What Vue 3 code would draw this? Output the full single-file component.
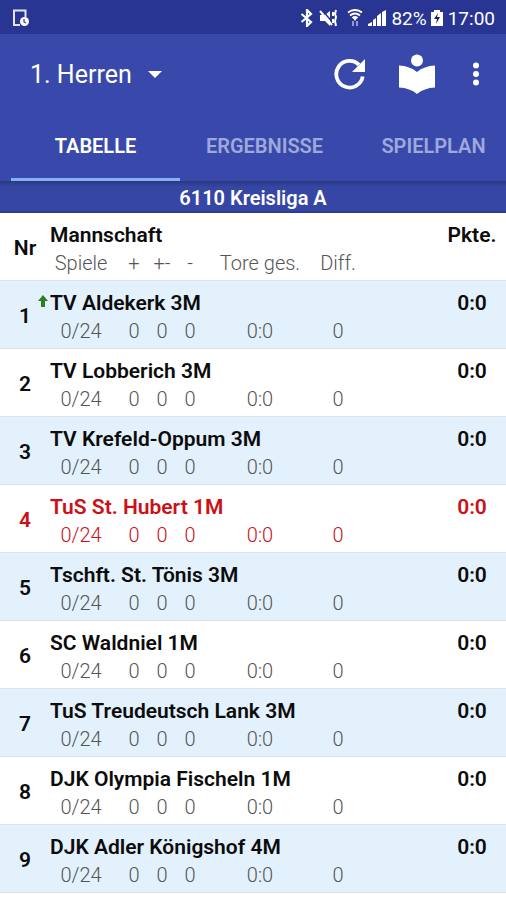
<script setup>
import { ref } from 'vue'

const mannschaft = ref('1. Herren')
const tabs = ['Tabelle', 'Ergebnisse', 'Spielplan']
const aktiv = ref('Tabelle')

const eigenes = 'TuS St. Hubert 1M'

const teams = [
  { name: 'TV Aldekerk 3M', auf: true },
  { name: 'TV Lobberich 3M' },
  { name: 'TV Krefeld-Oppum 3M' },
  { name: 'TuS St. Hubert 1M' },
  { name: 'Tschft. St. Tönis 3M' },
  { name: 'SC Waldniel 1M' },
  { name: 'TuS Treudeutsch Lank 3M' },
  { name: 'DJK Olympia Fischeln 1M' },
  { name: 'DJK Adler Königshof 4M' },
].map(t => ({ spiele: '0/24', s: 0, u: 0, n: 0, tore: '0:0', diff: 0, punkte: '0:0', ...t }))
</script>

<template>
  <div class="app">
    <div class="status">
      <svg width="18" height="18" viewBox="0 0 18 18">
        <path d="M8 16H2V1.500h11.500V8" fill="none" stroke="#e4e6f8" stroke-width="2" />
        <circle cx="12.500" cy="12.500" r="4.500" fill="#fff" />
        <path d="M12 10v3l2 1" fill="none" stroke="#283593" stroke-width="1.200" />
      </svg>
      <div class="status-right">
        <svg width="14" height="18" viewBox="0 0 14 18">
          <path d="M1.500 5l9.500 8-4 4V1l4 4-9.500 8" fill="none" stroke="#fff" stroke-width="2.200" />
        </svg>
        <svg class="mute" width="19" height="18" viewBox="0 0 19 18">
          <path d="M1 6h5l5-4v15l-5-5H1z" fill="#fff" />
          <path d="M3 1l12 14" stroke="#283593" stroke-width="1.500" />
          <path d="M1 2l12 14" stroke="#fff" stroke-width="2" />
          <path d="M14 3v4M14 10v4M17 1l-1 4 1 3-1 4 1 5" fill="none" stroke="#fff" stroke-width="2" />
        </svg>
        <svg class="wifi" width="16" height="18" viewBox="0 0 16 18">
          <path d="M1 3.500q7-5 14 0M3 6.500q5-4 10 0M5.500 9q2.500-2 5 0" fill="none" stroke="#fff" stroke-width="2" />
          <path d="M6 9h4L8 12z" fill="#fff" />
          <path d="M6 12v5M10 12v5" stroke="#8f98d2" stroke-width="2" />
        </svg>
        <svg class="signal" width="18" height="18" viewBox="0 0 18 18">
          <path d="M0 15l4-2v4H0zM5 11l3-2v8H5zM9 7l4-3v13H9zM14 3l4-2v16h-4z" fill="#fff" />
        </svg>
        <span class="akku">82%</span>
        <svg class="battery" width="12" height="18" viewBox="0 0 12 18">
          <path d="M3 1h6v2h3v14H0V3h3z" fill="#fff" />
          <path d="M7 4L3 10h3l-1 5 4-7H6z" fill="#1b2150" />
        </svg>
        <span>17:00</span>
      </div>
    </div>

    <header class="kopf">
      <div class="toolbar">
        <label class="auswahl">
          <select v-model="mannschaft" aria-label="Mannschaft">
            <option>1. Herren</option>
          </select>
          <svg width="14" height="7" viewBox="0 0 14 7"><path d="M0 0h14L7 7z" fill="#fff" /></svg>
        </label>
        <button class="icon" aria-label="Aktualisieren">
          <svg width="32" height="32" viewBox="0 0 32 32">
            <path d="M28.700 18.500A13.300 13.300 0 1 1 25 6.800" fill="none" stroke="#fff" stroke-width="3.800" />
            <path d="M31 1v13H18z" fill="#fff" />
          </svg>
        </button>
        <button class="icon" aria-label="Liga">
          <svg width="36" height="40" viewBox="0 0 36 40">
            <circle cx="18" cy="6.500" r="6" fill="#fff" />
            <path d="M18 18Q11 12 0 11.500V33.500Q11 34 18 40Q25 34 36 33.500V11.500Q25 12 18 18z" fill="#fff" />
          </svg>
        </button>
        <button class="icon mehr" aria-label="Mehr">
          <svg width="8" height="24" viewBox="0 0 8 24">
            <g fill="#fff">
              <circle cx="4" cy="3.500" r="3" />
              <circle cx="4" cy="12" r="3" />
              <circle cx="4" cy="20.500" r="3" />
            </g>
          </svg>
        </button>
      </div>

      <nav class="tabs">
        <button
          v-for="t in tabs"
          :key="t"
          class="tab"
          :class="{ aktiv: aktiv === t }"
          @click="aktiv = t"
        >{{ t }}</button>
      </nav>
    </header>

    <h1 class="liga">6110 Kreisliga A</h1>

    <table class="tabelle">
      <colgroup>
        <col class="c-nr">
        <col class="c-spiele">
        <col class="c-zahl">
        <col class="c-zahl">
        <col class="c-zahl">
        <col class="c-tore">
        <col class="c-diff">
        <col>
        <col class="c-pkte">
      </colgroup>
      <thead>
        <tr class="oben">
          <th class="nr" rowspan="2">Nr</th>
          <th class="name" colspan="7">Mannschaft</th>
          <th class="pkte">Pkte.</th>
        </tr>
        <tr class="unten">
          <th class="spiele">Spiele</th>
          <th>+</th>
          <th>+-</th>
          <th>-</th>
          <th>Tore ges.</th>
          <th>Diff.</th>
          <th colspan="2"></th>
        </tr>
      </thead>
      <tbody v-for="(t, i) in teams" :key="t.name" :class="{ eigenes: t.name === eigenes }">
        <tr class="oben">
          <td class="nr" rowspan="2">{{ i + 1 }}</td>
          <td class="name" colspan="7">
            <svg v-if="t.auf" class="pfeil" width="10" height="12" viewBox="0 0 10 12">
              <path d="M5 0l5 6H7v6H3V6H0z" fill="#2e7d1e" />
            </svg>{{ t.name }}
          </td>
          <td class="pkte">{{ t.punkte }}</td>
        </tr>
        <tr class="unten">
          <td class="spiele">{{ t.spiele }}</td>
          <td>{{ t.s }}</td>
          <td>{{ t.u }}</td>
          <td>{{ t.n }}</td>
          <td>{{ t.tore }}</td>
          <td>{{ t.diff }}</td>
          <td colspan="2"></td>
        </tr>
      </tbody>
    </table>
  </div>
</template>

<style>
body {
  background: #fff;
}
</style>

<style scoped>
.app {
  font-family: Roboto, "Liberation Sans", sans-serif;
  color: #0c0c0c;
  overflow: hidden;
}

button,
select {
  border: none;
  background: none;
  padding: 0;
  font-family: inherit;
  color: #fff;
  cursor: pointer;
}

svg {
  display: block;
  flex: none;
}

.status {
  display: flex;
  align-items: center;
  justify-content: space-between;
  height: 34px;
  padding: 2px 11px 0 12px;
  box-sizing: border-box;
  background: #283593;
  color: #fff;
  font-size: 19px;
}

.status-right {
  display: flex;
  align-items: center;
}

.mute {
  margin-left: 5px;
}

.wifi {
  margin-left: 9px;
}

.signal {
  margin-left: 5px;
}

.akku {
  margin-left: 5px;
}

.battery {
  margin: 0 5px 0 4px;
}

.kopf {
  background: #3949ab;
}

.toolbar {
  display: flex;
  align-items: center;
  height: 80px;
  padding: 0 26px 0 30px;
}

.auswahl {
  display: flex;
  align-items: center;
  gap: 16px;
  margin-right: auto;
}

.auswahl select {
  appearance: none;
  font-size: 25px;
  line-height: 32px;
  padding-top: 2px;
}

.icon {
  display: flex;
  margin-left: 33px;
}

.mehr {
  margin-left: 37px;
}

.tabs {
  display: flex;
  padding-left: 11px;
  height: 67px;
}

.tab {
  flex: 1 0 169px;
  box-sizing: border-box;
  border-bottom: 3px solid transparent;
  font-size: 20px;
  font-weight: 600;
  text-transform: uppercase;
  color: #9fa8da;
}

.tab.aktiv {
  color: #fff;
  border-bottom-color: #82b1f5;
}

.liga {
  margin: 0;
  height: 32px;
  line-height: 34px;
  text-align: center;
  font-size: 20px;
  font-weight: 600;
  color: #fff;
  background: linear-gradient(#2a3880, #3646a4 6px, #3646a4 29px, #283593);
}

.tabelle {
  width: 100%;
  table-layout: fixed;
  border-collapse: separate;
  border-spacing: 0;
}

.c-nr {
  width: 50px;
}

.c-spiele {
  width: 70px;
}

.c-zahl {
  width: 28px;
}

.c-tore {
  width: 112px;
}

.c-diff {
  width: 44px;
}

.c-pkte {
  width: 68px;
}

th,
td {
  padding: 0;
  text-align: center;
  white-space: nowrap;
  line-height: 28px;
}

.oben th,
.oben td {
  font-size: 21px;
  font-weight: 600;
}

.oben .name,
.oben .pkte {
  padding-top: 8px;
}

.oben .nr {
  padding-top: 2px;
}

.oben .name {
  position: relative;
  text-align: left;
}

.unten th,
.unten td {
  font-size: 20px;
  font-weight: 300;
  color: #555;
  padding-bottom: 3px;
}

.unten .spiele {
  padding-right: 8px;
}

.nr,
.unten th,
.unten td {
  border-bottom: 1px solid #dfe3e6;
}

.pfeil {
  position: absolute;
  left: -12px;
  top: 14px;
}

tbody:nth-of-type(odd) {
  background: #e3f1fc;
}

.eigenes td,
.eigenes .unten td {
  color: #cc1016;
}
</style>
